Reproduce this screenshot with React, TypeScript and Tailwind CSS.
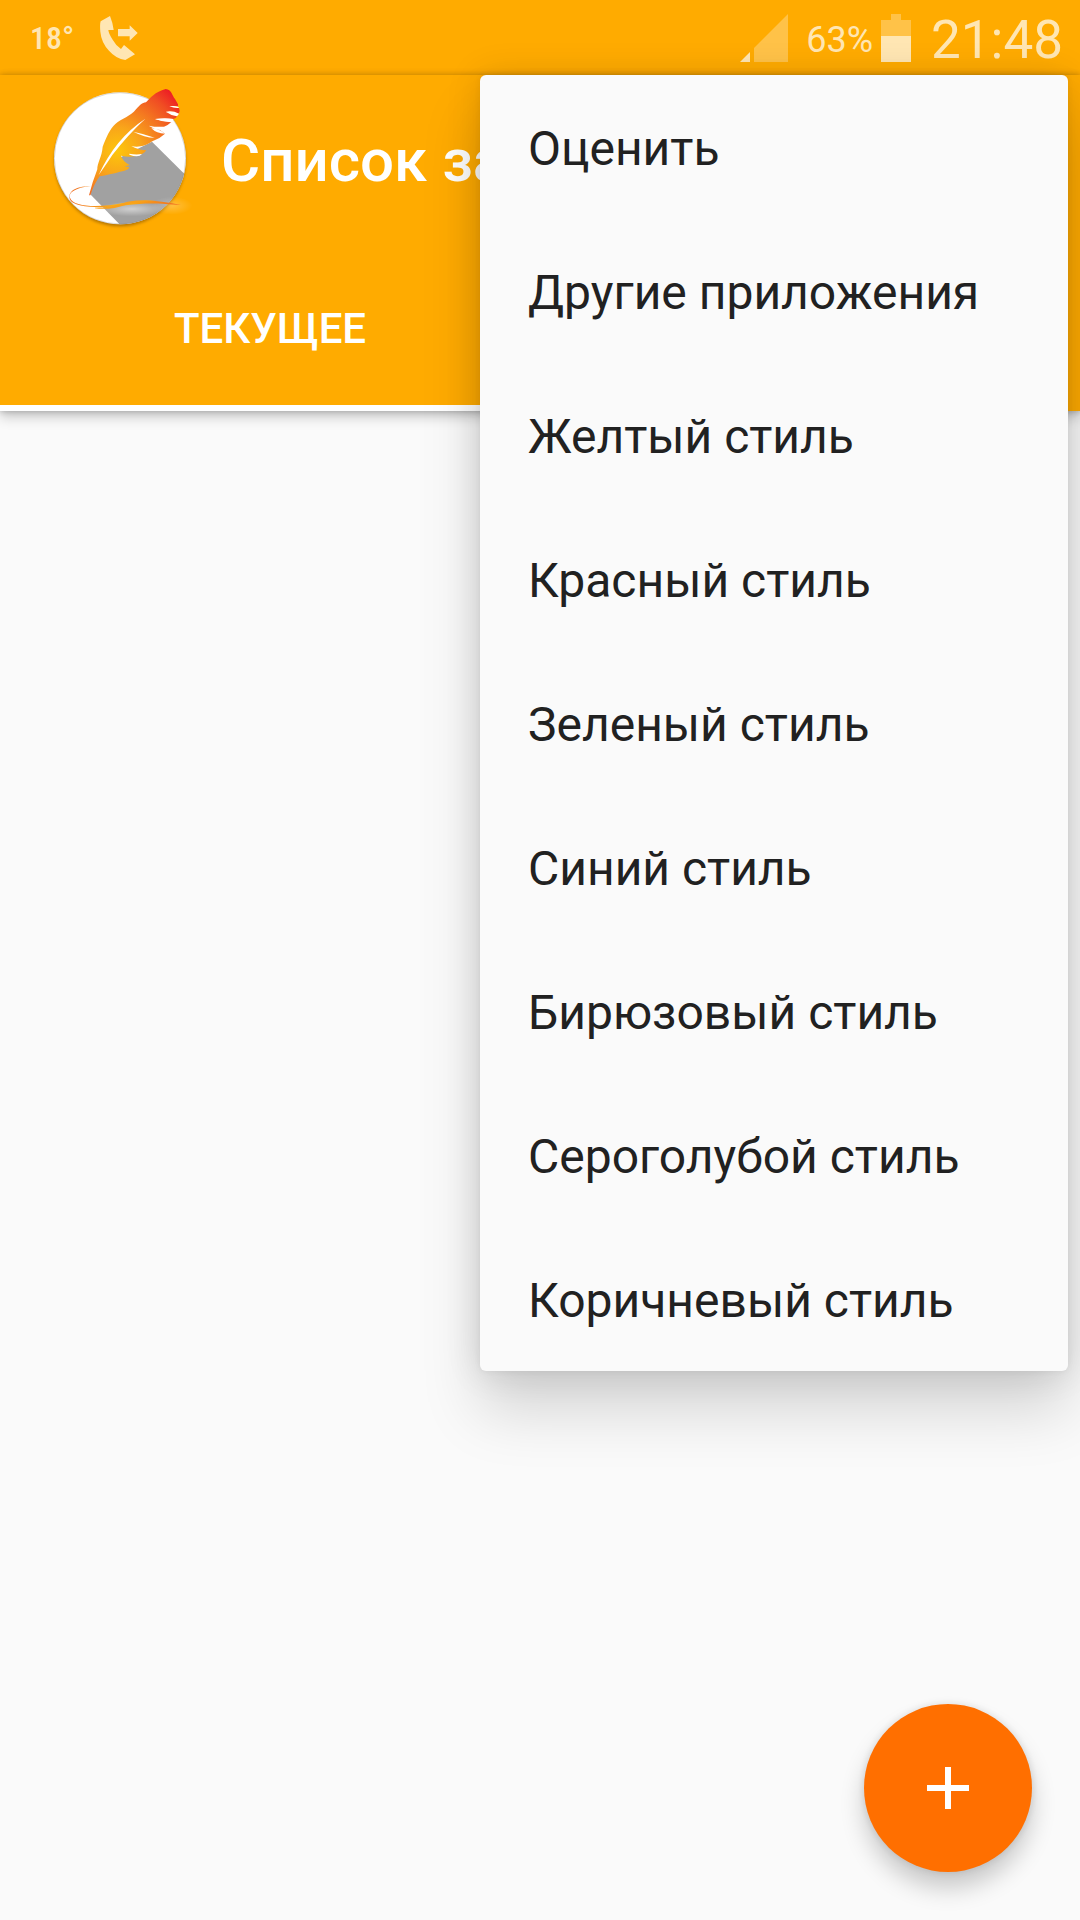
import { memo } from "react";

const menuItems = [
  "Оценить",
  "Другие приложения",
  "Желтый стиль",
  "Красный стиль",
  "Зеленый стиль",
  "Синий стиль",
  "Бирюзовый стиль",
  "Сероголубой стиль",
  "Коричневый стиль",
];

const StatusBar = memo(function StatusBar() {
  return (
    <div className="flex h-[75px] items-center justify-between bg-[#ffab00] pl-[30px] pr-[17px] text-[#ffe6b3]">
      <div className="flex items-center">
        <span className="w-[70px] font-['Roboto_Condensed','Liberation_Sans_Narrow','Roboto',sans-serif] text-[32px] font-medium leading-[40px]">
          18°
        </span>
        <svg className="h-11 w-[38px]" viewBox="0 0 114 132" fill="currentColor" role="img" aria-label="Переадресация">
          <path d="M30 0L2 16Q-1 23 1 47Q4 80 27 104Q48 128 76 132L105 115L72 87L63 99Q48 89 38 71Q26 53 25 42L41 42Q38 19 30 0Z" />
          <path d="M54 39H89V28L113 51L89 74V61H54Z" />
        </svg>
      </div>
      <div className="flex items-center">
        <svg className="h-12 w-12" viewBox="0 0 144 144" fill="currentColor" role="img" aria-label="Сигнал сети">
          <path d="M30 114V144H0Z" />
          <path d="M144 0V144H42V102Z" opacity="0.4" />
        </svg>
        <span className="ml-[18px] pt-1 text-[36px] leading-[48px]">63%</span>
        <svg className="ml-2 h-12 w-[30px]" viewBox="0 0 90 144" fill="currentColor" role="img" aria-label="Батарея">
          <path d="M30 0H60V18H90V66H0V18H30Z" opacity="0.4" />
          <path d="M0 66H90V144H0Z" />
        </svg>
        <span className="ml-5 pt-1 text-[53px] leading-[64px]">21:48</span>
      </div>
    </div>
  );
});

const Logo = memo(function Logo() {
  return (
    <svg className="h-[168px] w-[170px] shrink-0" viewBox="0 0 510 504" role="img" aria-label="Заметки">
      <defs>
        <radialGradient id="feather" gradientUnits="userSpaceOnUse" cx="232" cy="228" r="240">
          <stop offset="0" stopColor="#fdc60b" />
          <stop offset="0.3" stopColor="#f9a51a" />
          <stop offset="0.55" stopColor="#f47b20" />
          <stop offset="0.8" stopColor="#f04e23" />
          <stop offset="1" stopColor="#ed1c24" />
        </radialGradient>
        <linearGradient id="stroke" x1="0" x2="1" y1="0" y2="0">
          <stop offset="0" stopColor="#ee6b23" />
          <stop offset="0.45" stopColor="#fdb813" />
          <stop offset="1" stopColor="#ef6a24" />
        </linearGradient>
        <radialGradient id="glow">
          <stop offset="0" stopColor="#fff" stopOpacity="0.5" />
          <stop offset="1" stopColor="#fff" stopOpacity="0" />
        </radialGradient>
        <clipPath id="disc">
          <circle cx="240" cy="250" r="198" />
        </clipPath>
        <filter id="drop" x="-10%" y="-10%" width="120%" height="125%">
          <feGaussianBlur stdDeviation="4" />
        </filter>
      </defs>
      <circle cx="240" cy="257" r="197" fill="#7a4b00" opacity="0.55" filter="url(#drop)" />
      <circle cx="240" cy="250" r="198" fill="#fff" />
      <path d="M336 200L470 333V480H270L150 357L175 280Z" fill="#a1a1a1" clipPath="url(#disc)" />
      <circle cx="240" cy="250" r="197" fill="none" stroke="#8d8d8d" strokeOpacity="0.5" strokeWidth="2" />
      <ellipse cx="275" cy="402" rx="100" ry="22" fill="url(#glow)" />
      <ellipse cx="395" cy="392" rx="62" ry="27" fill="url(#glow)" opacity="0.5" />
      <path
        d="M147 361Q158 318 172 283C171 265 186 245 188 215C198 190 210 160 226 147C245 130 272 125 288 103C300 91 306 83 318 82C330 70 345 50 377 42C395 43 397 64 405 72L414 88V94Q400 92 388 94Q402 98 417 99Q421 107 416 116Q396 107 378 111Q394 120 412 123Q407 132 400 132Q370 130 345 132Q370 139 394 141Q384 151 372 155Q350 157 326 152Q340 162 360 165L375 176Q358 192 337 199Q317 213 302 214Q288 217 274 213Q294 225 319 226Q311 239 284 244Q262 247 243 242Q246 257 270 271L254 274L268 277Q265 285 251 288L240 290C220 296 199 300 179 304Q163 325 151 361Z"
        fill="url(#feather)"
      />
      <g fill="#fff">
        <path d="M316 131Q226 190 176 300Q203 262 217 240Q262 181 316 131Z" />
        <path d="M280 170Q310 176 344 188Q314 188 280 170Z" />
        <path d="M345 132Q377 128 400 132L394 142Q370 142 345 132Z" />
        <path d="M334 160Q355 160 375 176Q350 176 334 160Z" />
        <path d="M378 110Q398 106 417 116L411 124Q392 121 378 110Z" />
        <path d="M388 94Q402 91 414 95L417 99Q402 100 388 94Z" />
        <path d="M268 236Q288 240 306 237Q296 250 268 239Z" />
      </g>
      <path
        d="M153 334C105 337 84 355 90 368C99 397 180 398 250 384C318 371 365 378 423 390C360 385 320 382 257 391C184 401 105 398 91 376C80 350 107 333 153 334Z"
        fill="url(#stroke)"
      />
      <path d="M165 398Q215 398 263 380Q308 373 349 378Q293 378 259 389Q210 406 165 400Z" fill="#f9a11b" />
    </svg>
  );
});

const AppHeader = memo(function AppHeader() {
  return (
    <header className="relative bg-[#ffab00] text-white shadow-[0_0_6px_rgba(0,0,0,0.24),0_6px_12px_rgba(0,0,0,0.2)]">
      <div className="flex h-[168px] items-center overflow-hidden pl-10">
        <Logo />
        <h1 className="ml-[11px] whitespace-nowrap pt-1 text-[60px] font-medium leading-[72px]">Список за</h1>
      </div>
      <div className="flex" role="tablist">
        <button
          type="button"
          role="tab"
          aria-selected="true"
          className="h-[168px] flex-1 border-b-[6px] border-white pt-[10px] text-[42px] font-medium uppercase leading-[48px]"
        >
          Текущее
        </button>
        <div className="flex-1" />
      </div>
    </header>
  );
});

const StyleMenu = memo(function StyleMenu() {
  return (
    <div
      role="menu"
      className="absolute right-3 top-[75px] flex w-[588px] flex-col rounded-md bg-[#fafafa] shadow-[0_0_6px_rgba(0,0,0,0.06),0_0_36px_rgba(0,0,0,0.12),0_40px_60px_rgba(0,0,0,0.15)]"
    >
      {menuItems.map((item) => (
        <button
          key={item}
          type="button"
          role="menuitem"
          className="h-36 px-12 pt-1 text-left text-[48px] leading-[56px] text-[#212121]"
        >
          {item}
        </button>
      ))}
    </div>
  );
});

export default function App() {
  return (
    <div className="relative flex min-h-screen flex-col overflow-hidden bg-[#fafafa] font-['Roboto',sans-serif]">
      <StatusBar />
      <AppHeader />
      <main className="flex-1" />
      <StyleMenu />
      <button
        type="button"
        aria-label="Добавить"
        className="fixed bottom-12 right-12 flex size-[168px] items-center justify-center rounded-full bg-[#ff6f00] text-white shadow-[0_0_8px_rgba(0,0,0,0.12),0_16px_24px_rgba(0,0,0,0.2)]"
      >
        <svg className="size-[42px]" viewBox="0 0 42 42" fill="currentColor">
          <path d="M18 0H24V18H42V24H24V42H18V24H0V18H18Z" />
        </svg>
      </button>
    </div>
  );
}
